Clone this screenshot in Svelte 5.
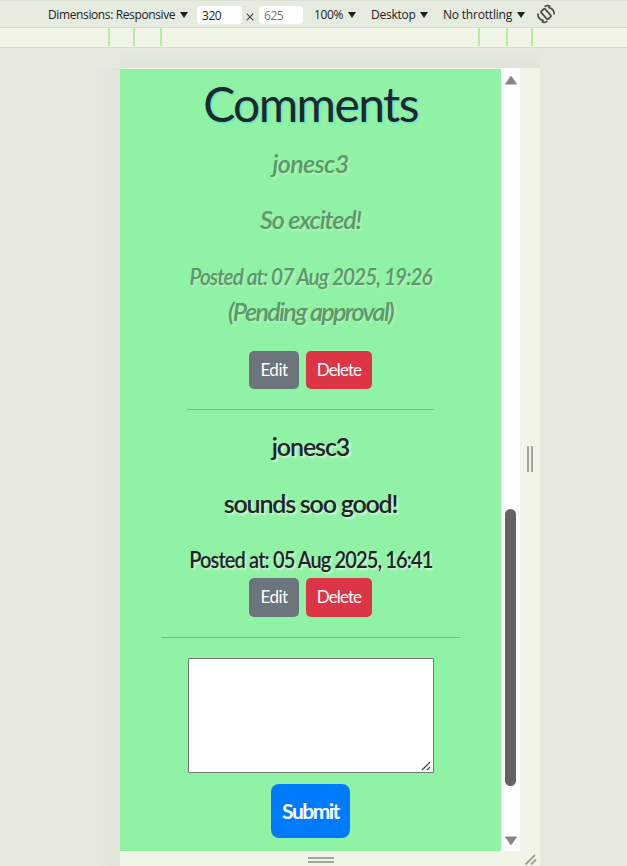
<script>
  const comments = [
    { author: 'jonesc3', body: 'So excited!', posted: '07 Aug 2025, 19:26', pending: true },
    { author: 'jonesc3', body: 'sounds soo good!', posted: '05 Aug 2025, 16:41', pending: false }
  ];
  const ticks = [108, 133, 160, 478, 506, 531];
</script>

<div class="window">
  <header class="toolbar">
    <span class="label dims">Dimensions: Responsive</span><i class="caret"></i>
    <span class="field width">320</span>
    <svg class="times" width="8" height="8" viewBox="0 0 8 8"><path d="M.7.7l6.6 6.6M7.3.7L.7 7.3" /></svg>
    <span class="field height">625</span>
    <span class="label zoom">100%</span><i class="caret"></i>
    <span class="label device">Desktop</span><i class="caret"></i>
    <span class="label throttle">No throttling</span><i class="caret"></i>
    <svg class="rotate" width="20" height="20" viewBox="0 0 20 20">
      <rect x="7.3" y="4.8" width="5.4" height="10.4" rx="1" transform="rotate(-42 10 10)" />
      <path d="M8.6 2.6Q11.5.8 14.3 2.4M12.2 3.4C15.8 4 18.2 6.6 18.2 10.4M11.4 17.4Q8.5 19.2 5.7 17.6M7.8 16.6C4.2 16 1.8 13.4 1.8 9.6" />
    </svg>
  </header>
  <div class="ruler">
    {#each ticks as x}<i style="left:{x}px"></i>{/each}
  </div>

  <div class="stage">
    <div class="shade"></div>
    <div class="frame">
      <div class="viewport">
        <main>
          <h1>Comments</h1>
          {#each comments as c}
            <article class:pending={c.pending}>
              <p class="author">{c.author}</p>
              <p class="body">{c.body}</p>
              <p class="posted">Posted at: {c.posted}</p>
              {#if c.pending}<p class="status">(Pending approval)</p>{/if}
              <div class="actions">
                <button class="edit">Edit</button>
                <button class="delete">Delete</button>
              </div>
            </article>
            <hr class:short={c.pending} />
          {/each}
          <div class="textarea">
            <svg width="10" height="10" viewBox="0 0 10 10"><path d="M1 9L9 1M6 9l3-3" /></svg>
          </div>
          <button class="submit">Submit</button>
        </main>
        <div class="scrollbar">
          <svg width="14" height="10" viewBox="0 0 14 10"><path d="M7 1.2L12.4 9H1.6z" /></svg>
          <div class="thumb"></div>
          <svg width="14" height="10" viewBox="0 0 14 10"><path d="M7 8.8L1.6 1h10.8z" /></svg>
        </div>
        <div class="side"><span></span></div>
      </div>
      <div class="bottom">
        <span class="grip"></span>
        <svg width="14" height="13" viewBox="0 0 14 13"><path d="M1.5 11.5L11 2M7 11.5l5-5" /></svg>
      </div>
    </div>
  </div>
</div>

<style>
  :global(body) { margin: 0; overflow: hidden; }
  .window {
    width: 627px; height: 866px; overflow: hidden; background: #e4eadf;
    display: flex; flex-direction: column; box-sizing: border-box;
  }
  .toolbar {
    height: 27px; flex: none; display: flex; align-items: center; box-sizing: border-box;
    padding: 1px 0 0 48px; background: #e5ebdf; border-top: 1px solid #dce2d5;
    font: 12px "Open Sans", sans-serif; color: #1d221b;
  }
  .label { white-space: nowrap; flex: none; }
  .dims { width: 127px; letter-spacing: -0.38px; }
  .zoom { width: 29px; margin-left: 11px; letter-spacing: -0.35px; }
  .device { width: 44px; margin-left: 15px; letter-spacing: -0.25px; }
  .throttle { width: 69px; margin-left: 15px; letter-spacing: -0.2px; }
  .caret {
    flex: none; margin-left: 5px; border: 4px solid transparent;
    border-top: 6px solid #1d221b; border-bottom: 0; width: 0; height: 0; margin-top: 1px;
  }
  .zoom, .device, .throttle { position: relative; }
  .field {
    flex: none; height: 18px; line-height: 19px; border-radius: 4px; background: #fff;
    box-sizing: border-box; padding-left: 5px; letter-spacing: -0.45px; margin-top: 0;
  }
  .field.width { width: 45px; margin-left: 9px; }
  .field.height { width: 44px; color: #777; }
  .times { flex: none; margin: 4px 5px 0 4px; stroke: #444b40; stroke-width: 1.1; fill: none; }
  .rotate { flex: none; margin: -1px 0 0 11px; stroke: #4a5047; stroke-width: 1.7; fill: none; }

  .ruler {
    position: relative; height: 21px; flex: none; box-sizing: border-box;
    background: #f0f5e7; border-top: 1px solid #b9edaa; border-bottom: 1px solid #b9edaa;
  }
  .ruler i { position: absolute; top: 0; height: 18px; width: 2px; background: #b5eda4; }

  .stage { flex: 1; display: flex; }
  .shade { width: 120px; flex: none; margin-top: 20px; background: linear-gradient(90deg, transparent 78%, #e0e6da 92%); }
  .frame { width: 420px; flex: none; display: flex; flex-direction: column; padding-top: 20px; background: linear-gradient(#e4eadf, #dfe5d8 20px); }
  .viewport { height: 783px; display: flex; }
  main {
    width: 381px; height: 783px; box-sizing: border-box; border-top: 1px solid #f1f7ec;
    background: #90f2a4; display: flex; flex-direction: column; align-items: center;
    font-family: Lato, sans-serif; color: #212529;
  }
  h1 {
    margin: 0 0 6px; height: 69px; line-height: 69px; font-size: 48px; font-weight: 400;
    letter-spacing: -1.6px; text-shadow: 1px 1px 2px #55dcd6; color: #1d2a2a;
  }
  article { display: flex; flex-direction: column; align-items: center; }
  p {
    margin: 0; height: 36px; line-height: 36px; font-size: 25px; font-weight: 600;
    white-space: nowrap; text-shadow: 2px 2px 2px #d3f5d6; letter-spacing: -1.1px;
  }
  .author { margin-bottom: 21px; }
  .body { margin-bottom: 20px; letter-spacing: -1.2px; }
  .posted { font-size: 23px; letter-spacing: -1px; margin-bottom: 1px; transform: scaleX(0.87); }
  .pending p { color: #5b9868; font-style: italic; font-weight: 600; text-shadow: 2px 2px 2px #b5efbb; }
  .pending .author { letter-spacing: -0.6px; line-height: 38px; }
  .pending .body { letter-spacing: -1.1px; }
  .pending .posted { margin-bottom: 0; line-height: 38px; transform: scaleX(0.9); }
  .pending .status { letter-spacing: -1.6px; line-height: 37px; }
  .actions { display: flex; gap: 7px; height: 39px; }
  .pending .actions { margin-top: 22px; height: 38px; }
  button { border: 0; padding: 0 0 2px; color: #fff; font: 17px Lato, sans-serif; border-radius: 5px; }
  .edit { width: 50px; background: #6c757d; letter-spacing: -0.5px; }
  .delete { width: 66px; background: #dc3545; letter-spacing: -0.9px; }
  hr { width: 299px; border: 0; height: 1px; margin: 20px 0; background: #72bd82; }
  hr.short { width: 247px; margin-bottom: 18px; }
  .textarea {
    width: 246px; height: 115px; box-sizing: border-box; border: 1px solid #767676; border-radius: 1px;
    background: #fff; display: flex; align-items: flex-end; justify-content: flex-end; padding: 1px 2px;
  }
  .textarea svg { stroke: #444; stroke-width: 1.2; fill: none; }
  .submit {
    margin-top: 11px; width: 79px; height: 54px; border-radius: 8px; background: #007bff;
    font-size: 21px; font-weight: 700; letter-spacing: -1.5px;
  }
  .scrollbar {
    width: 19px; box-sizing: border-box; background: #fdfefd; display: flex; flex-direction: column;
    align-items: center; padding: 7px 0 5px;
  }
  .scrollbar svg { flex: none; fill: #858585; stroke: #858585; stroke-linejoin: round; }
  .thumb { width: 11px; height: 277px; border-radius: 6px; background: #636363; margin: 424px 0 50px; }
  .side { width: 20px; background: #f0f5e7; display: flex; align-items: center; justify-content: center; }
  .side span { width: 2px; height: 26px; border: solid #a1a59b; border-width: 0 2px; margin-bottom: 2px; }
  .bottom { flex: 1; background: #f0f5e7; display: flex; }
  .grip { width: 26px; height: 2px; border: solid #a1a59b; border-width: 2px 0; margin: 6px 0 0 188px; }
  .bottom svg { margin: 2px 0 0 190px; stroke: #9a9e95; stroke-width: 1.8; fill: none; }
</style>
